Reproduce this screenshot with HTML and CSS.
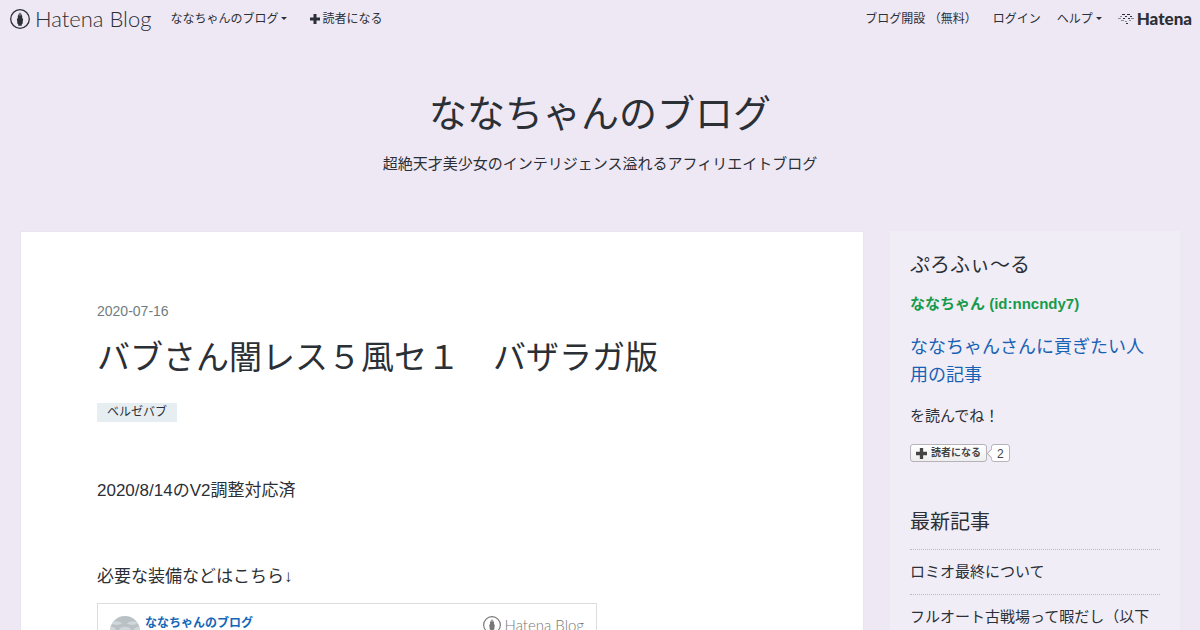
FILE: index.html
```html
<!DOCTYPE html>
<html lang="ja">
<head>
<meta charset="utf-8">
<meta name="viewport" content="width=device-width, initial-scale=1">
<title>ななちゃんのブログ</title>
<link rel="stylesheet" href="styles.css">
</head>
<body>
<svg width="0" height="0" class="symbols" aria-hidden="true">
  <symbol id="pen" viewBox="0 0 20 20">
    <circle cx="10" cy="10" r="9.3" fill="none" stroke="currentColor" stroke-width="1.3"/>
    <path fill="currentColor" d="M9.7 3.2 7.8 7v2l-.9.9.6 5.2h.7v1.6h3.600v-1.6h.7l.6-5.200-.9-.9V7l-1.900-3.800v3.600h-.6z"/>
  </symbol>
  <symbol id="plus" viewBox="0 0 10 10">
    <path fill="currentColor" d="M3.5 0h3v3.5H10v3H6.5V10h-3V6.5H0v-3h3.5z"/>
  </symbol>
</svg>

<nav class="globalheader">
  <div class="nav-left">
    <a class="logo" href="#"><svg class="logo-pen"><use href="#pen"/></svg><span>Hatena Blog</span></a>
    <a class="caret" href="#">ななちゃんのブログ</a>
    <a class="nav-subscribe" href="#"><svg><use href="#plus"/></svg>読者になる</a>
  </div>
  <div class="nav-right">
    <a href="#">ブログ開設 （無料）</a>
    <a href="#">ログイン</a>
    <a class="caret" href="#">ヘルプ</a>
    <a class="company" href="#">
      <svg viewBox="0 0 16 12" fill="none" stroke="currentColor"><path stroke-width="1" d="M4 1.5h3M9 1.5h3M7 3.5h2M12 3.5h2M5 5.5h2M10 5.5h2M8 10.500h2"/><path stroke-width=".5" d="M2 3.500h2M0 5.500h3M13 5.500h3M3 7.500h3M11 7.500h2M7 8.500h2"/></svg>
      <span>Hatena</span>
    </a>
  </div>
</nav>

<header class="blog-header">
  <h1><a href="#">ななちゃんのブログ</a></h1>
  <p>超絶天才美少女のインテリジェンス溢れるアフィリエイトブログ</p>
</header>

<div class="content">
  <main class="entry">
    <a class="date" href="#"><time datetime="2020-07-16">2020-07-16</time></a>
    <h2><a href="#">バブさん闇レス５風セ１　バザラガ版</a></h2>
    <div class="categories"><a href="#">ベルゼバブ</a></div>
    <div class="entry-body">
      <p>2020/8/14のV2調整対応済</p>
      <p>必要な装備などはこちら↓</p>
      <article class="card">
        <svg class="avatar" viewBox="0 0 32 32"><defs><clipPath id="round"><circle cx="16" cy="16" r="16"/></clipPath></defs><g clip-path="url(#round)"><path fill="#b9c1c4" d="M0 0h32v32H0z"/><g fill="#d0d7da"><path d="M1 8q6-5 12 0-6 3-12 0M18 8q6-5 12 0-6 3-12 0M9 14q7-5 14 0-7 3-14 0M-5 14q6-5 12 0-6 3-12 0M25 14q6-5 12 0-6 3-12 0M1 20q6-5 12 0-6 3-12 0M18 20q6-5 12 0-6 3-12 0"/></g></g></svg>
        <a class="card-title" href="#">ななちゃんのブログ</a>
        <a class="card-logo" href="#"><svg><use href="#pen"/></svg><span>Hatena Blog</span></a>
      </article>
    </div>
  </main>

  <aside class="sidebar">
    <section class="profile">
      <h3>ぷろふぃ～る</h3>
      <a class="profile-id" href="#">ななちゃん (id:nncndy7)</a>
      <a class="profile-link" href="#">ななちゃんさんに貢ぎたい人用の記事</a>
      <p>を読んでね！</p>
      <div class="subscribe">
        <button type="button"><svg><use href="#plus"/></svg>読者になる</button>
        <a class="count" href="#">2</a>
      </div>
    </section>
    <section class="recent">
      <h3>最新記事</h3>
      <ul>
        <li><a href="#">ロミオ最終について</a></li>
        <li><a href="#">フルオート古戦場って暇だし（以下</a></li>
      </ul>
    </section>
  </aside>
</div>
</body>
</html>
```
FILE: styles.css
```css
* {
  box-sizing: border-box;
}

body {
  margin: 0;
  background: #eee8f4;
  color: #2b2f36;
  font-family: "Liberation Sans", "Noto Sans CJK JP", sans-serif;
  font-size: 15px;
  line-height: 24px;
}

a {
  color: inherit;
  text-decoration: none;
}

h1, h2, h3, p, ul {
  margin: 0;
  padding: 0;
  font-weight: 400;
}

.symbols {
  position: absolute;
}

/* Global navigation */
.globalheader {
  display: flex;
  justify-content: space-between;
  align-items: center;
  height: 37px;
  padding: 0 8px 0 10px;
  font-size: 12px;
  white-space: nowrap;
}

.nav-left, .nav-right, .logo, .company, .nav-subscribe {
  display: flex;
  align-items: center;
}

.nav-right {
  gap: 16px;
}

.logo {
  gap: 5px;
  margin-right: 19px;
  font-family: Lato, "Liberation Sans", sans-serif;
  font-size: 22px;
  font-weight: 300;
}

.logo-pen {
  width: 20px;
  height: 20px;
}

.caret::after {
  content: "";
  display: inline-block;
  margin-left: 3px;
  border: 3px solid transparent;
  border-top: 3px solid currentColor;
  border-bottom: 0;
  vertical-align: 3px;
}

.nav-subscribe {
  gap: 2px;
  margin-left: 23px;
}

.nav-subscribe svg {
  width: 10px;
  height: 10px;
}

.company {
  gap: 3px;
  font-family: Lato, "Liberation Sans", sans-serif;
  font-size: 17px;
  font-weight: 900;
}

.company svg {
  width: 16px;
  height: 12px;
}

/* Blog title */
.blog-header {
  padding: 49px 20px 55px;
  text-align: center;
}

.blog-header h1 {
  margin-bottom: 10px;
  font-size: 38px;
  line-height: 56px;
}

/* Columns */
.content {
  display: grid;
  grid-template-columns: minmax(0, 1fr) 290px;
  gap: 26px;
  padding: 0 20px;
}

.entry {
  padding: 67px 76px;
  border: 1px solid #e8e5ee;
  background: #fff;
}

.date {
  display: block;
  color: #6f7d80;
  font-size: 14px;
}

.entry h2 {
  margin: 11px 0 21px;
  font-size: 33px;
  line-height: 48px;
}

.categories {
  display: flex;
}

.categories a {
  padding: 0 10px;
  background: #e7eef1;
  font-size: 12px;
  line-height: 19px;
}

.entry-body {
  padding-top: 54px;
  font-size: 17px;
  line-height: 30px;
}

.entry-body p + p {
  margin-top: 56px;
}

.card {
  display: flex;
  align-items: flex-start;
  max-width: 500px;
  height: 190px;
  margin-top: 11px;
  padding: 12px;
  border: 1px solid #ddd;
  font-size: 12px;
  line-height: 14px;
}

.avatar {
  width: 30px;
  height: 30px;
}

.card-title {
  margin-left: 5px;
  color: #1466b8;
  font-weight: 700;
}

.card-logo {
  display: flex;
  align-items: center;
  gap: 4px;
  margin-left: auto;
  color: #777;
  font-family: Lato, "Liberation Sans", sans-serif;
  font-size: 15px;
  font-weight: 300;
  line-height: 18px;
}

.card-logo svg {
  width: 18px;
  height: 18px;
}

/* Sidebar */
.sidebar {
  padding: 18px 20px;
  background: #f1edf6;
}

.sidebar h3 {
  font-size: 20px;
  line-height: 32px;
}

.profile-id, .profile-link {
  display: block;
}

.profile-id {
  margin: 11px 0 17px;
  color: #169b4c;
  font-weight: 700;
}

.profile-link {
  margin-bottom: 15px;
  color: #1862b4;
  font-size: 18px;
  line-height: 28px;
}

.subscribe {
  display: flex;
  gap: 4px;
  margin: 16px 0 44px;
}

.subscribe button, .count {
  height: 18px;
  border: 1px solid #b5b3b8;
  border-radius: 3px;
  background: #fff;
  color: #444;
}

.subscribe button {
  display: flex;
  align-items: center;
  gap: 4px;
  padding: 0 5px;
  background: linear-gradient(#fff, #eee);
  font-family: inherit;
  font-size: 10px;
  font-weight: 700;
  line-height: 16px;
}

.subscribe svg {
  width: 11px;
  height: 11px;
}

.count {
  position: relative;
  padding: 0 5px;
  font-size: 12px;
  line-height: 18px;
}

.count::before {
  content: "";
  position: absolute;
  top: 5px;
  left: -4px;
  width: 6px;
  height: 6px;
  border: solid #b5b3b8;
  border-width: 0 0 1px 1px;
  background: #fff;
  transform: rotate(45deg);
}

.recent ul {
  margin-top: 11px;
  list-style: none;
}

.recent li {
  padding: 10px 0;
  border-top: 1px dotted #bbb8c2;
}
```
